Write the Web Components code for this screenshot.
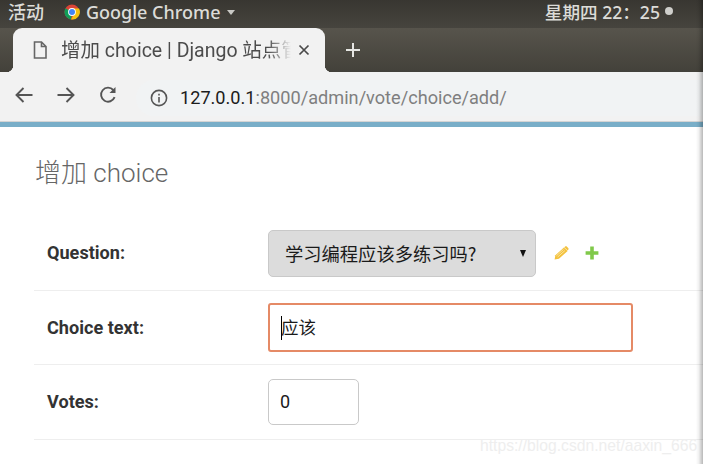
<!DOCTYPE html>
<html>
<head>
<meta charset="utf-8">
<style>
  html, body { margin: 0; padding: 0; background: #fff; overflow: hidden; }
  body { width: 708px; height: 464px; font-family: Roboto, "Noto Sans CJK SC", sans-serif; }
</style>
</head>
<body>
<desk-shell>
  <top-bar></top-bar>
  <browser-tabs title-text="增加 choice | Django 站点管理"></browser-tabs>
  <address-bar></address-bar>
  <admin-page>
    <form-row label="Question:">
      <question-select>学习编程应该多练习吗?</question-select>
    </form-row>
    <form-row label="Choice text:">
      <text-box focused wide>应该</text-box>
    </form-row>
    <form-row label="Votes:">
      <text-box>0</text-box>
    </form-row>
  </admin-page>
</desk-shell>

<script>
const UI_FONT = `"Noto Sans", "Noto Sans CJK SC", sans-serif`;

class DeskShell extends HTMLElement {
  constructor() {
    super();
    this.attachShadow({ mode: "open" });
    this.shadowRoot.innerHTML = `
      <style>
        :host { display: flex; width: 708px; height: 464px; position: relative; overflow: hidden; background: #fff; }
        .main { width: 703px; display: flex; flex-direction: column; flex-shrink: 0; }
        /* window shadow falling over the right side of the photo */
        .edge {
          position: absolute; left: 696px; top: 0; width: 7px; height: 464px;
          background: linear-gradient(to right, rgba(0,0,0,0), rgba(0,0,0,.06) 40%, rgba(0,0,0,.28));
        }
        .mark {
          position: absolute; left: 480px; top: 436px;
          font: 15.7px/20px "Liberation Sans", sans-serif; color: #eeeeee; white-space: nowrap;
        }
      </style>
      <div class="main"><slot></slot></div>
      <div class="edge"></div>
      <div class="mark">https://blog.csdn.net/aaxin_666</div>
    `;
  }
}

class TopBar extends HTMLElement {
  constructor() {
    super();
    this.attachShadow({ mode: "open" });
    this.shadowRoot.innerHTML = `
      <style>
        :host {
          display: flex; height: 28px; align-items: center; flex-shrink: 0;
          background: linear-gradient(#383631, #46443e);
          color: #dcdcd8; font: 500 18px/20px ${UI_FONT};
          padding: 0 0 4px 8px; box-sizing: border-box;
        }
        .app { display: flex; align-items: center; margin-left: 20px; gap: 6px; }
        .caret { width: 0; height: 0; border: 4.5px solid transparent; border-top: 5px solid #c9c9c5; border-bottom: 0; margin-left: 1px; margin-top: 1px; }
        .clock { margin-left: auto; margin-right: 43px; position: relative; font-size: 17.6px; }
        .dot { position: absolute; right: -13px; top: 5px; width: 8px; height: 8px; border-radius: 50%; background: #cfcfcb; }
      </style>
      <span>活动</span>
      <div class="app">
        <svg width="16" height="16" viewBox="0 0 16 16">
          <circle cx="8" cy="8" r="7.5" fill="#db4437"/>
          <path d="M8 8 L1.5 4.2 A7.5 7.5 0 0 0 7 15.4 Z" fill="#0f9d58"/>
          <path d="M8 4.5 H15 A7.5 7.5 0 0 1 7 15.4 L10.9 8.6 Z" fill="#f4c20d"/>
          <circle cx="8" cy="8" r="3.9" fill="#fff"/>
          <circle cx="8" cy="8" r="3" fill="#4285f4"/>
        </svg>
        <span>Google Chrome</span>
        <span class="caret"></span>
      </div>
      <span class="clock">星期四 22：25<span class="dot"></span></span>
    `;
  }
}

class BrowserTabs extends HTMLElement {
  constructor() {
    super();
    this.attachShadow({ mode: "open" });
    this.shadowRoot.innerHTML = `
      <style>
        :host {
          display: flex; height: 44px; flex-shrink: 0; align-items: flex-end;
          background: linear-gradient(#57544c, #43413a);
          padding-left: 13px; box-sizing: border-box;
        }
        .tab {
          width: 312px; height: 44px; background: #f2f2f2; border-radius: 9px 9px 0 0;
          display: flex; align-items: center; box-sizing: border-box; padding-left: 20px;
          position: relative;
        }
        /* little flares at the foot of the tab */
        .tab::before, .tab::after {
          content: ""; position: absolute; bottom: 0; width: 7px; height: 7px;
        }
        .tab::before { left: -7px; background: radial-gradient(circle at 0 0, transparent 7px, #f2f2f2 7.5px); }
        .tab::after { right: -7px; background: radial-gradient(circle at 100% 0, transparent 7px, #f2f2f2 7.5px); }
        .title {
          width: 230px; margin: 2px 0 0 14px; overflow: hidden; white-space: nowrap;
          font: 19.5px/24px Roboto, "Noto Sans CJK SC", sans-serif; color: #4c4c4c;
          -webkit-mask-image: linear-gradient(to right, #000 90%, transparent);
        }
        .close { margin-left: 7px; }
        .plus { margin-left: 20px; align-self: center; }
      </style>
      <div class="tab">
        <svg width="14" height="18" viewBox="0 0 14 18" fill="none" stroke="#666" stroke-width="1.6">
          <path d="M1.5 1 H8.5 L13 5.5 V17 H1.5 Z M8.5 1 V5.5 H13"/>
        </svg>
        <span class="title"></span>
        <svg class="close" width="12" height="12" viewBox="0 0 12 12" stroke="#4a4a4a" stroke-width="1.7">
          <path d="M1.5 1.5 L10.5 10.5 M10.5 1.5 L1.5 10.5"/>
        </svg>
      </div>
      <svg class="plus" width="16" height="16" viewBox="0 0 16 16" stroke="#e6e6e3" stroke-width="2">
        <path d="M8 1 V15 M1 8 H15"/>
      </svg>
    `;
    this.shadowRoot.querySelector(".title").textContent = this.getAttribute("title-text");
  }
}

class AddressBar extends HTMLElement {
  constructor() {
    super();
    this.attachShadow({ mode: "open" });
    this.shadowRoot.innerHTML = `
      <style>
        :host {
          display: flex; height: 50px; flex-shrink: 0; align-items: center; box-sizing: border-box;
          background: #f2f2f2; border-bottom: 1px solid #d4d4d4; padding-left: 15px;
        }
        svg { flex-shrink: 0; }
        .nav { margin: 0 24px 3px 0; }
        .pill {
          flex: 1; height: 36px; margin: 3px 0 0 -5px; background: #f1f3f4;
          border-radius: 18px 0 0 18px; display: flex; align-items: center; padding-left: 14px;
          font: 18.15px/24px Roboto, sans-serif; color: #7f7f7f; white-space: nowrap;
        }
        .host { color: #1c1c1c; margin-left: 12px; }
      </style>
      <svg class="nav" width="18" height="16" viewBox="0 0 18 16" fill="none" stroke="#555" stroke-width="1.9">
        <path d="M17.5 8 H1.8 M8.5 1 L1.5 8 L8.5 15"/>
      </svg>
      <svg class="nav" width="18" height="16" viewBox="0 0 18 16" fill="none" stroke="#555" stroke-width="1.9">
        <path d="M0.5 8 H16.2 M9.5 1 L16.5 8 L9.5 15"/>
      </svg>
      <svg class="nav" width="18" height="18" viewBox="0 0 18 18" fill="none" stroke="#555" stroke-width="1.9">
        <path d="M15.6 11.2 A7 7 0 1 1 14.3 4"/>
        <path d="M16.5 1 V7 H10.5 Z" fill="#555" stroke="none"/>
      </svg>
      <div class="pill">
        <svg width="18" height="18" viewBox="0 0 18 18" fill="none" stroke="#555" stroke-width="1.6">
          <circle cx="9" cy="9" r="7.6"/>
          <path d="M9 8 V13.5 M9 4.8 V6.6"/>
        </svg>
        <span class="host">127.0.0.1</span><span>:8000/admin/vote/choice/add/</span>
      </div>
    `;
  }
}

class AdminPage extends HTMLElement {
  constructor() {
    super();
    this.attachShadow({ mode: "open" });
    this.shadowRoot.innerHTML = `
      <style>
        :host {
          display: flex; flex-direction: column; flex: 1; background: #fff;
          border-top: 5px solid #79aec8; padding: 0 0 0 34px;
        }
        h1 {
          margin: 29px 0 0 1px; font: 300 26px/34px Roboto, "Noto Sans CJK SC", sans-serif; color: #666;
        }
        .rows { margin-top: 26.3px; }
      </style>
      <h1>增加 choice</h1>
      <div class="rows"><slot></slot></div>
    `;
  }
}

class FormRow extends HTMLElement {
  constructor() {
    super();
    this.attachShadow({ mode: "open" });
    this.shadowRoot.innerHTML = `
      <style>
        :host {
          display: flex; align-items: center; box-sizing: border-box; height: 74.6px;
          border-bottom: 1px solid #eeeeee; padding-left: 13px;
        }
        label { width: 221px; flex-shrink: 0; font: 700 18.1px/20px Roboto, sans-serif; color: #333; }
      </style>
      <label></label>
      <slot></slot>
    `;
    this.shadowRoot.querySelector("label").textContent = this.getAttribute("label");
  }
}

class QuestionSelect extends HTMLElement {
  constructor() {
    super();
    this.attachShadow({ mode: "open" });
    this.shadowRoot.innerHTML = `
      <style>
        :host { display: flex; align-items: center; }
        .box {
          width: 268px; height: 47px; box-sizing: border-box; background: #dcdcdc;
          border: 1px solid #c9c9c9; border-radius: 5px; display: flex; align-items: center;
          padding: 0 9px 0 16px; font: 18.3px/24px "Noto Sans CJK SC", sans-serif; color: #1a1a1a;
        }
        .text { flex: 1; white-space: nowrap; }
        .arrow { width: 0; height: 0; border: 3.5px solid transparent; border-top: 7px solid #111; border-bottom: 0; }
        .edit { margin-left: 18px; }
        .add { margin-left: 16px; }
      </style>
      <div class="box"><span class="text"><slot></slot></span><span class="arrow"></span></div>
      <svg class="edit" width="15" height="14" viewBox="0 0 15 14">
        <path d="M0.6 13.4 L1.4 9.3 L9.9 1.6 L13.6 5 L4.9 12.8 Z" fill="#f3c13d"/>
        <path d="M10.9 0.8 C11.6 0.2 12.4 0.2 13 0.7 L14.2 1.9 C14.8 2.5 14.7 3.2 14.2 3.8 L13.6 4.4 L10.2 1.3 Z" fill="#f3c13d"/>
        <path d="M2.4 9.8 L9.5 3.4 M3.6 11 L10.9 4.6" stroke="#fff3c9" stroke-width="0.7"/>
      </svg>
      <svg class="add" width="14" height="14" viewBox="0 0 14 14">
        <path d="M5.2 0.6 H8.8 V5.2 H13.4 V8.8 H8.8 V13.4 H5.2 V8.8 H0.6 V5.2 H5.2 Z" fill="#80c94a"/>
      </svg>
    `;
  }
}

class TextBox extends HTMLElement {
  constructor() {
    super();
    this.attachShadow({ mode: "open" });
    const focused = this.hasAttribute("focused");
    const wide = this.hasAttribute("wide");
    this.shadowRoot.innerHTML = `
      <style>
        :host {
          display: flex; align-items: center; box-sizing: border-box; height: ${focused ? 49 : 46}px;
          width: ${wide ? 365 : 91}px; border-radius: ${focused ? 3 : 5}px; background: #fff;
          border: ${focused ? "2px solid #e58a66" : "1px solid #c9c9c9"};
          padding-left: 11px;
          font: ${focused ? 17.5 : 18}px/24px Roboto, "Noto Sans CJK SC", sans-serif; color: #1a1a1a;
        }
        .caret { width: 1px; height: 24px; background: #000; margin-right: -1px; flex-shrink: 0; }
      </style>
      ${focused ? '<span class="caret"></span>' : ""}
      <slot></slot>
    `;
  }
}

customElements.define("desk-shell", DeskShell);
customElements.define("top-bar", TopBar);
customElements.define("browser-tabs", BrowserTabs);
customElements.define("address-bar", AddressBar);
customElements.define("admin-page", AdminPage);
customElements.define("form-row", FormRow);
customElements.define("question-select", QuestionSelect);
customElements.define("text-box", TextBox);
</script>
</body>
</html>
